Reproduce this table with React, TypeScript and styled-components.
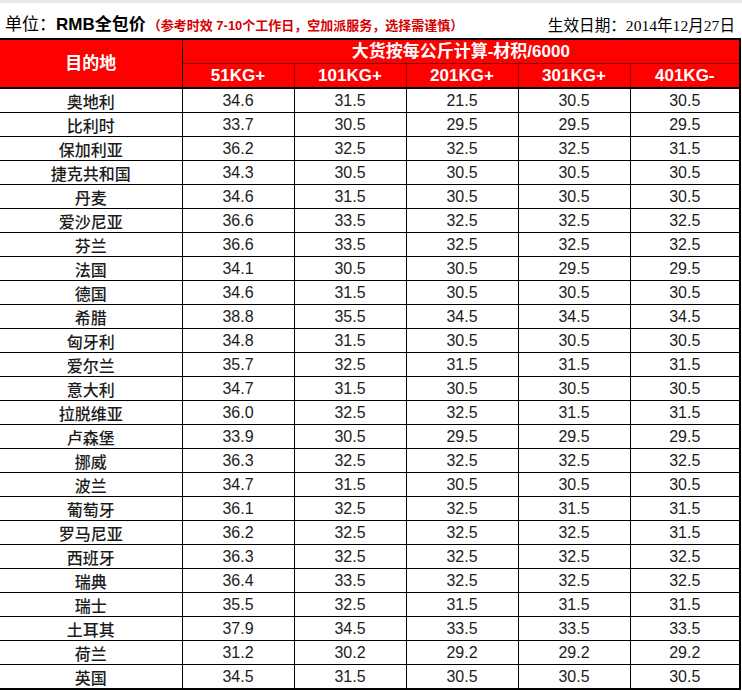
import React from 'react'
import styled, { createGlobalStyle } from 'styled-components'

const GlobalStyle = createGlobalStyle`
  html, body {
    margin: 0;
    padding: 0;
    background: #ffffff;
  }
`

const PageUI = styled.div`
  width: 742px;
  height: 691px;
  overflow: hidden;
  background: #ffffff;
  border-top: 3px solid #e6e9ed;
  box-sizing: border-box;
`

const TitleBarUI = styled.div`
  height: 35px;
  display: flex;
  justify-content: space-between;
  align-items: flex-end;
  padding: 0 7px 1px 5px;
  box-sizing: border-box;
`

const UnitUI = styled.div`
  font-family: 'Noto Sans CJK SC', sans-serif;
  font-size: 17px;
  line-height: 22px;
  color: #000;
  white-space: nowrap;
  & b {
    font-family: 'Liberation Sans', 'Noto Sans CJK SC', sans-serif;
    font-weight: 700;
  }
`

const NoteUI = styled.span`
  font-family: 'Liberation Sans', 'Noto Sans CJK SC', sans-serif;
  font-size: 13px;
  font-weight: 700;
  color: #d40000;
  margin-left: 2px;
`

const DateUI = styled.div`
  font-family: 'Liberation Serif', 'Noto Sans CJK SC', serif;
  font-size: 15.6px;
  line-height: 22px;
  color: #000;
  white-space: nowrap;
`

const TableUI = styled.table`
  border-collapse: collapse;
  table-layout: fixed;
  width: 740px;
  border-top: 2px solid #000;
  border-right: 2px solid #000;
  border-bottom: 2px solid #000;
`

const HeadCellUI = styled.th<{ $first?: boolean }>`
  background: #ff0000;
  color: #ffffff;
  font-family: 'Liberation Sans', 'Noto Sans CJK SC', sans-serif;
  font-weight: 700;
  font-size: 17px;
  text-align: center;
  height: 23px;
  padding: 0;
  line-height: 22px;
  border: 1px solid #8a0000;
  border-left: none;
  border-right: 1px solid ${({ $first }) => ($first ? '#000' : '#8a0000')};
  border-bottom: 2px solid #000;
  &.top {
    border-bottom: 1px solid #8a0000;
  }
`

const CellUI = styled.td<{ $name?: boolean }>`
  font-family: ${({ $name }) =>
    $name ? "'Noto Sans CJK SC', sans-serif" : "'Liberation Sans', sans-serif"};
  font-weight: ${({ $name }) => ($name ? 500 : 400)};
  font-size: 16px;
  color: #1c1c1c;
  text-align: center;
  height: 23px;
  padding: 0;
  line-height: 20px;
  border-bottom: 1px solid #000;
  border-right: 1px solid #000;
`

type RowType = [string, string, string, string, string, string]

const rows: RowType[] = [
  ['奥地利', '34.6', '31.5', '21.5', '30.5', '30.5'],
  ['比利时', '33.7', '30.5', '29.5', '29.5', '29.5'],
  ['保加利亚', '36.2', '32.5', '32.5', '32.5', '31.5'],
  ['捷克共和国', '34.3', '30.5', '30.5', '30.5', '30.5'],
  ['丹麦', '34.6', '31.5', '30.5', '30.5', '30.5'],
  ['爱沙尼亚', '36.6', '33.5', '32.5', '32.5', '32.5'],
  ['芬兰', '36.6', '33.5', '32.5', '32.5', '32.5'],
  ['法国', '34.1', '30.5', '30.5', '29.5', '29.5'],
  ['德国', '34.6', '31.5', '30.5', '30.5', '30.5'],
  ['希腊', '38.8', '35.5', '34.5', '34.5', '34.5'],
  ['匈牙利', '34.8', '31.5', '30.5', '30.5', '30.5'],
  ['爱尔兰', '35.7', '32.5', '31.5', '31.5', '31.5'],
  ['意大利', '34.7', '31.5', '30.5', '30.5', '30.5'],
  ['拉脱维亚', '36.0', '32.5', '32.5', '31.5', '31.5'],
  ['卢森堡', '33.9', '30.5', '29.5', '29.5', '29.5'],
  ['挪威', '36.3', '32.5', '32.5', '32.5', '32.5'],
  ['波兰', '34.7', '31.5', '30.5', '30.5', '30.5'],
  ['葡萄牙', '36.1', '32.5', '32.5', '31.5', '31.5'],
  ['罗马尼亚', '36.2', '32.5', '32.5', '32.5', '31.5'],
  ['西班牙', '36.3', '32.5', '32.5', '32.5', '32.5'],
  ['瑞典', '36.4', '33.5', '32.5', '32.5', '32.5'],
  ['瑞士', '35.5', '32.5', '31.5', '31.5', '31.5'],
  ['土耳其', '37.9', '34.5', '33.5', '33.5', '33.5'],
  ['荷兰', '31.2', '30.2', '29.2', '29.2', '29.2'],
  ['英国', '34.5', '31.5', '30.5', '30.5', '30.5'],
]

const weights = ['51KG+', '101KG+', '201KG+', '301KG+', '401KG-']
const colWidths = [182, 112, 112, 112, 112, 110]

export default function App() {
  return (
    <PageUI>
      <GlobalStyle />
      <TitleBarUI>
        <UnitUI>
          单位：<b>RMB全包价</b>
          <NoteUI>（参考时效 7-10个工作日，空加派服务，选择需谨慎）</NoteUI>
        </UnitUI>
        <DateUI>生效日期：2014年12月27日</DateUI>
      </TitleBarUI>
      <TableUI>
        <colgroup>
          {colWidths.map((w, i) => (
            <col key={i} style={{ width: w }} />
          ))}
        </colgroup>
        <thead>
          <tr>
            <HeadCellUI $first rowSpan={2}>
              目的地
            </HeadCellUI>
            <HeadCellUI className="top" colSpan={5}>
              大货按每公斤计算-材积/6000
            </HeadCellUI>
          </tr>
          <tr>
            {weights.map((w) => (
              <HeadCellUI key={w}>{w}</HeadCellUI>
            ))}
          </tr>
        </thead>
        <tbody>
          {rows.map(([name, ...prices]) => (
            <tr key={name}>
              <CellUI $name>{name}</CellUI>
              {prices.map((p, i) => (
                <CellUI key={i}>{p}</CellUI>
              ))}
            </tr>
          ))}
        </tbody>
      </TableUI>
    </PageUI>
  )
}
